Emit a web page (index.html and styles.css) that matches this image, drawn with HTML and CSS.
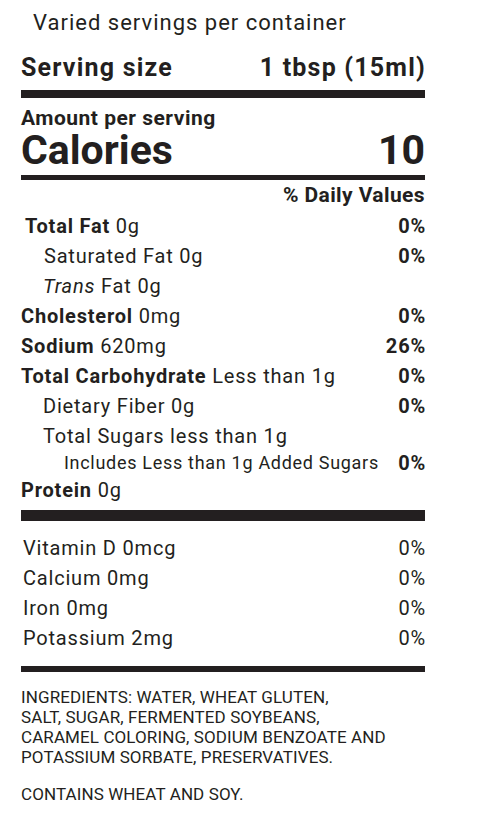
FILE: index.html
```html
<!DOCTYPE html>
<html lang="en">
<head>
    <meta charset="UTF-8">
    <meta name="viewport" content="width=device-width, initial-scale=1.0">
    <title>Nutrition Facts</title>
    <link rel="stylesheet" href="styles.css">
</head>
<body>
    <div class="label">
        <p class="servings">Varied servings per container</p>
        <div class="serving_size">
            <span>Serving size</span>
            <span>1 tbsp (15ml)</span>
        </div>
        <div class="rule rule_thick"></div>

        <p class="amount">Amount per serving</p>
        <div class="calories">
            <span>Calories</span>
            <span>10</span>
        </div>
        <div class="rule rule_mid"></div>

        <p class="dv_head">% Daily Values</p>
        <div class="nutrients">
            <div class="row shift"><span><b>Total Fat</b> 0g</span><b>0%</b></div>
            <div class="row sub"><span>Saturated Fat 0g</span><b>0%</b></div>
            <div class="row sub2"><span><i>Trans</i> Fat 0g</span></div>
            <div class="row"><span><b>Cholesterol</b> 0mg</span><b>0%</b></div>
            <div class="row"><span><b>Sodium</b> 620mg</span><b>26%</b></div>
            <div class="row"><span><b>Total Carbohydrate</b> Less than 1g</span><b>0%</b></div>
            <div class="row sub2"><span>Dietary Fiber 0g</span><b>0%</b></div>
            <div class="row sub2"><span>Total Sugars less than 1g</span></div>
            <div class="row added"><span>Includes Less than 1g Added Sugars</span><b>0%</b></div>
            <div class="row"><span><b>Protein</b> 0g</span></div>
        </div>
        <div class="rule rule_heavy"></div>

        <div class="vitamins">
            <div class="row"><span>Vitamin D 0mcg</span><span>0%</span></div>
            <div class="row"><span>Calcium 0mg</span><span>0%</span></div>
            <div class="row"><span>Iron 0mg</span><span>0%</span></div>
            <div class="row"><span>Potassium 2mg</span><span>0%</span></div>
        </div>
        <div class="rule rule_bottom"></div>

        <p class="ingredients">INGREDIENTS: WATER, WHEAT GLUTEN,<br>SALT, SUGAR, FERMENTED SOYBEANS,<br>CARAMEL COLORING, SODIUM BENZOATE AND<br>POTASSIUM SORBATE, PRESERVATIVES.</p>
        <p class="contains">CONTAINS WHEAT AND SOY.</p>
    </div>
</body>
</html>
```

FILE: styles.css
```css
*{
    margin: 0;
    padding: 0;
    box-sizing: border-box;
}
body{
    background: #fff;
    color: #231f20;
    font-family: Roboto, "Liberation Sans", sans-serif;
}
.label{
    width: 404px;
    margin-left: 21px;
}
.servings{
    padding: 11px 0 0 12px;
    font-size: 22px;
    line-height: 24px;
    letter-spacing: 1px;
}
.serving_size{
    display: flex;
    justify-content: space-between;
    margin-top: 19px;
    font-size: 25px;
    font-weight: 700;
    line-height: 28px;
    letter-spacing: 1.2px;
}
.serving_size span:last-child{
    margin-right: -1px;
}
.rule{
    background: #231f20;
}
.rule_thick{
    height: 8px;
    margin-top: 8px;
}
.amount{
    margin-top: 10px;
    font-size: 21px;
    font-weight: 700;
    line-height: 20px;
    letter-spacing: 0.5px;
}
.calories{
    display: flex;
    justify-content: space-between;
    margin-top: 2px;
    font-size: 41px;
    font-weight: 700;
    line-height: 40px;
}
.rule_mid{
    height: 5px;
    margin-top: 5px;
}
.dv_head{
    margin-top: 4px;
    text-align: right;
    font-size: 21px;
    font-weight: 700;
    line-height: 22px;
    letter-spacing: 0.4px;
}
.nutrients{
    margin-top: 5px;
}
.row{
    display: flex;
    justify-content: space-between;
    font-size: 20px;
    line-height: 30px;
    letter-spacing: 0.8px;
}
.row b{
    font-weight: 700;
}
.row i{
    font-style: italic;
}
.row > :last-child{
    margin-right: -1px;
}
.shift{
    padding-left: 4px;
}
.sub{
    padding-left: 23px;
}
.sub2{
    padding-left: 22px;
}
.added{
    padding-left: 43px;
    font-size: 18px;
    line-height: 24px;
    letter-spacing: 0.7px;
}
.added b{
    font-size: 20px;
    letter-spacing: 0.8px;
}
.rule_heavy{
    height: 11px;
    margin-top: 5px;
}
.vitamins{
    margin-top: 12px;
    padding-left: 2px;
}
.rule_bottom{
    height: 6px;
    margin-top: 13px;
}
.ingredients, .contains{
    font-size: 17px;
    line-height: 20px;
    letter-spacing: 0.1px;
}
.ingredients{
    margin-top: 15px;
}
.contains{
    margin-top: 17px;
}
```
